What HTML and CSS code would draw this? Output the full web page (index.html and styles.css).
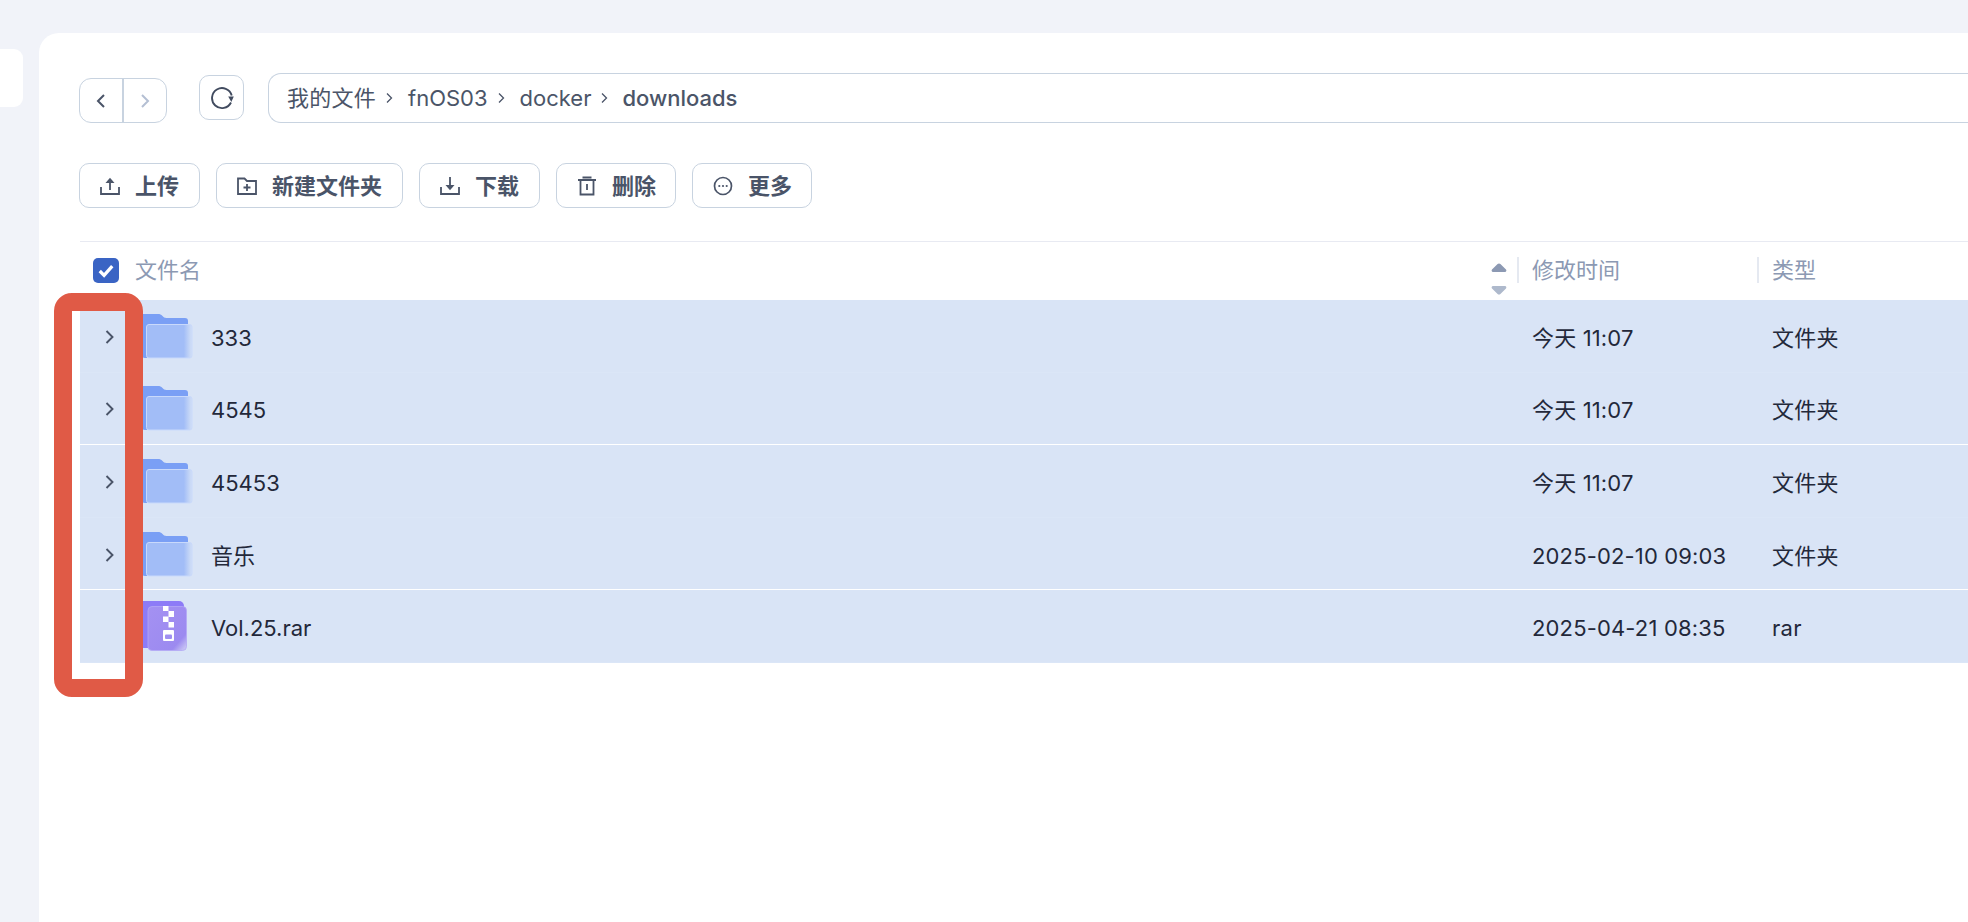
FILE: index.html
```html
<!DOCTYPE html>
<html lang="zh-CN">
<head>
<meta charset="utf-8">
<title>downloads</title>
<link rel="stylesheet" href="styles.css">
</head>
<body>
<svg class="defs" width="0" height="0" aria-hidden="true">
  <defs>
    <linearGradient id="fade" x1="0" x2="1" y1="0" y2="0">
      <stop offset="0" stop-color="#a2bdf7"/>
      <stop offset=".82" stop-color="#a2bdf7"/>
      <stop offset="1" stop-color="#d3e0f6"/>
    </linearGradient>
    <linearGradient id="fadeRar" x1="0" x2="1" y1="0" y2="1">
      <stop offset="0" stop-color="#a491f2"/>
      <stop offset=".8" stop-color="#9c8af0"/>
      <stop offset="1" stop-color="#d3d2f5"/>
    </linearGradient>
    <symbol id="folder" viewBox="0 0 52 46">
      <path d="M0 1h17c2 0 3 .5 4.500 2 1 1 2 2 4 2H44c2 0 3 1 3 3v6H8v31H4c-2 0-4-2-4-4z" fill="#7a9ff5"/>
      <rect x="5.500" y="11.500" width="45.500" height="33.500" rx="2.500" fill="url(#fade)" stroke="#c9d9fb"/>
    </symbol>
    <symbol id="rar" viewBox="0 0 46 50">
      <rect x="-6" y="0" width="49" height="47" rx="5" fill="#8d7bf7"/>
      <rect x="7" y="5.500" width="38.500" height="44" rx="4" fill="url(#fadeRar)" stroke="#b4a8f5" stroke-width=".8"/>
      <g fill="#fff">
        <rect x="22" y="5" width="5.500" height="5"/>
        <rect x="27.500" y="10" width="5.500" height="6"/>
        <rect x="22" y="15.500" width="5.500" height="5.500"/>
        <rect x="27.500" y="21" width="5.500" height="5.500"/>
      </g>
      <rect x="22" y="29" width="11" height="11" rx="1" fill="#fff"/>
      <rect x="24" y="33.500" width="7" height="4.500" rx="1" fill="#a08ff1"/>
    </symbol>
  </defs>
</svg>

<div class="page">
  <aside class="side-stub"></aside>
  <main class="panel">
    <div class="nav-bar">
      <div class="nav-group">
        <button class="nav-btn">
          <svg class="ic-nav" viewBox="0 0 12 16"><path d="M9 2 3 8l6 6" fill="none" stroke="#4a5468" stroke-width="2"/></svg>
        </button>
        <button class="nav-btn nav-next">
          <svg class="ic-nav" viewBox="0 0 12 16"><path d="M3 2l6 6-6 6" fill="none" stroke="#b4bfd3" stroke-width="2"/></svg>
        </button>
      </div>
      <button class="refresh">
        <svg class="ic-refresh" viewBox="0 0 24 24"><path d="M21 16.500A10 10 0 1 1 21.700 9.500" fill="none" stroke="#414b5f" stroke-width="1.900"/><path d="M18.200 10.500h5.600l-2.500 5.500z" fill="#414b5f"/></svg>
      </button>
      <div class="path-bar">
        <span class="crumb crumb-cjk">我的文件</span><svg class="ic-sep" viewBox="0 0 8 12"><path d="M2 1.500 6.500 6 2 10.500" fill="none" stroke="#4a5468" stroke-width="1.300"/></svg>
        <span class="crumb">fnOS03</span><svg class="ic-sep" viewBox="0 0 8 12"><path d="M2 1.500 6.500 6 2 10.500" fill="none" stroke="#4a5468" stroke-width="1.300"/></svg>
        <span class="crumb">docker</span><svg class="ic-sep" viewBox="0 0 8 12"><path d="M2 1.500 6.500 6 2 10.500" fill="none" stroke="#4a5468" stroke-width="1.300"/></svg>
        <span class="crumb crumb-current">downloads</span>
      </div>
    </div>

    <div class="toolbar">
      <button class="tool w-upload">
        <svg class="ic-tool" viewBox="0 0 20 20"><path d="M1 11v7h18v-7M10 14V3" fill="none" stroke="#4a5468" stroke-width="1.800"/><path d="M5.500 7 10 1.800 14.500 7z" fill="#4a5468"/></svg>
        <span>上传</span>
      </button>
      <button class="tool w-new">
        <svg class="ic-tool" viewBox="0 0 20 20"><path d="M1 18V2.500h6.500L10 5h9v13zM10 8v7M6.500 11.500h7" fill="none" stroke="#4a5468" stroke-width="1.800"/></svg>
        <span>新建文件夹</span>
      </button>
      <button class="tool w-down">
        <svg class="ic-tool" viewBox="0 0 20 20"><path d="M1 11v7h18v-7M10 1v9" fill="none" stroke="#4a5468" stroke-width="1.800"/><path d="M5.500 9 10 14.200 14.500 9z" fill="#4a5468"/></svg>
        <span>下载</span>
      </button>
      <button class="tool w-del">
        <svg class="ic-tool" viewBox="0 0 20 20"><path d="M1 4h18M5.500 1.500h9M3.500 4v14.500h13V4M10 8v6" fill="none" stroke="#4a5468" stroke-width="1.800"/></svg>
        <span>删除</span>
      </button>
      <button class="tool w-more">
        <svg class="ic-tool" viewBox="0 0 20 20"><circle cx="10" cy="10" r="8.500" fill="none" stroke="#4a5468" stroke-width="1.700"/><g fill="#4a5468"><circle cx="6.300" cy="10" r="1.100"/><circle cx="10" cy="10" r="1.100"/><circle cx="13.700" cy="10" r="1.100"/></g></svg>
        <span>更多</span>
      </button>
    </div>

    <div class="table">
      <div class="thead">
        <div class="th th-name">
          <span class="check"><svg viewBox="0 0 26 26"><path d="M6.500 13.500 11 18 19.500 8.500" fill="none" stroke="#fff" stroke-width="3.400"/></svg></span>
          <span class="th-label">文件名</span>
          <span class="sort">
            <svg viewBox="0 0 16 10" class="sort-up"><path d="M8 .5c.6 0 1 .2 1.400.6L15 6.500c.8.800.3 2.500-1 2.500H2C.7 9 .2 7.300 1 6.500L6.600 1.100C7 .7 7.400.5 8 .5z"/></svg>
            <svg viewBox="0 0 16 10" class="sort-down"><path d="M8 9.500c.6 0 1-.2 1.400-.6L15 3.500c.8-.8.3-2.500-1-2.500H2C.7 1 .2 2.700 1 3.500l5.600 5.400c.4.400.8.600 1.400.600z"/></svg>
          </span>
        </div>
        <div class="th th-date"><span class="th-label">修改时间</span></div>
        <div class="th th-type"><span class="th-label">类型</span></div>
      </div>

      <div class="row">
        <div class="cell-name"><span class="expander"><svg viewBox="0 0 10 14"><path d="M1.500 1 7.500 7 1.500 13" fill="none" stroke="#4a5468" stroke-width="1.900"/></svg></span><svg class="ic-folder"><use href="#folder"/></svg><span class="fname">333</span></div>
        <div class="cell-date">今天 11:07</div>
        <div class="cell-type">文件夹</div>
      </div>
      <div class="row row-split">
        <div class="cell-name"><span class="expander"><svg viewBox="0 0 10 14"><path d="M1.500 1 7.500 7 1.500 13" fill="none" stroke="#4a5468" stroke-width="1.900"/></svg></span><svg class="ic-folder"><use href="#folder"/></svg><span class="fname">4545</span></div>
        <div class="cell-date">今天 11:07</div>
        <div class="cell-type">文件夹</div>
      </div>
      <div class="row">
        <div class="cell-name"><span class="expander"><svg viewBox="0 0 10 14"><path d="M1.500 1 7.500 7 1.500 13" fill="none" stroke="#4a5468" stroke-width="1.900"/></svg></span><svg class="ic-folder"><use href="#folder"/></svg><span class="fname">45453</span></div>
        <div class="cell-date">今天 11:07</div>
        <div class="cell-type">文件夹</div>
      </div>
      <div class="row row-split">
        <div class="cell-name"><span class="expander"><svg viewBox="0 0 10 14"><path d="M1.500 1 7.500 7 1.500 13" fill="none" stroke="#4a5468" stroke-width="1.900"/></svg></span><svg class="ic-folder"><use href="#folder"/></svg><span class="fname">音乐</span></div>
        <div class="cell-date">2025-02-10 09:03</div>
        <div class="cell-type">文件夹</div>
      </div>
      <div class="row">
        <div class="cell-name"><span class="expander"></span><svg class="ic-rar"><use href="#rar"/></svg><span class="fname">Vol.25.rar</span></div>
        <div class="cell-date">2025-04-21 08:35</div>
        <div class="cell-type">rar</div>
      </div>
    </div>
  </main>
</div>
<div class="annotation"></div>
</body>
</html>
```

FILE: styles.css
```css
* { box-sizing: border-box; }
html, body { margin: 0; height: 100%; }
body {
  background: #f1f3f9;
  font-family: Inter, "Noto Sans CJK SC", sans-serif;
  font-size: 22px;
  line-height: 30px;
  color: #23283a;
  overflow: hidden;
  position: relative;
}
button { font: inherit; color: inherit; background: none; padding: 0; margin: 0; cursor: pointer; }
.defs { position: absolute; }

.page { display: flex; height: 922px; }
.side-stub {
  width: 23px; height: 58px; margin-top: 49px; margin-right: 16px;
  background: #fff; border-radius: 0 9px 9px 0; flex: none;
}
.panel {
  flex: 1; min-width: 0; margin-top: 33px;
  background: #fff; border-radius: 20px 0 0 0;
  padding: 40px 0 0 40px;
}

.nav-bar { display: flex; align-items: flex-start; height: 49px; }
.nav-group {
  display: flex; width: 88px; height: 45px; margin-top: 5px;
  border: 1px solid #c8d3e0; border-radius: 12px; flex: none;
}
.nav-btn { flex: 1; border: 0; display: flex; align-items: center; justify-content: center; }
.nav-next { border-left: 2px solid #c8d3e0; }
.ic-nav { width: 12px; height: 16px; }
.refresh {
  width: 45px; height: 45px; margin: 2px 0 0 32px;
  border: 1px solid #c8d3e0; border-radius: 10px; flex: none;
  display: flex; align-items: center; justify-content: center;
}
.ic-refresh { width: 24px; height: 24px; }
.path-bar {
  flex: 1; height: 50px; margin-left: 24px; padding-left: 18px;
  border: 1px solid #c8d3e0; border-right: 0; border-radius: 13px 0 0 13px;
  display: flex; align-items: center; color: #4b5568;
}
.crumb { white-space: nowrap; }
.crumb-cjk { letter-spacing: .25px; }
.crumb-current { font-weight: 500; margin-left: -1px; }
.ic-sep { width: 8px; height: 12px; margin: 0 15px 0 9px; flex: none; }

.toolbar { display: flex; gap: 16px; margin-top: 41px; }
.tool {
  height: 45px; border: 1px solid #c8d3e0; border-radius: 10px; background: #fff;
  display: flex; align-items: center; padding-left: 20px;
  font-weight: 600; color: #4a5468; flex: none;
}
.w-upload { width: 121px; }
.w-new { width: 187px; }
.w-down { width: 121px; }
.w-del { width: 120px; }
.w-more { width: 120px; }
.ic-tool { width: 20px; height: 20px; margin-right: 15px; flex: none; }

.table { margin: 33px 0 0 1px; }
.thead {
  display: flex; height: 59px; padding-bottom: 2px; border-top: 1px solid #e8eaf2;
  color: #8c99b3; align-items: center;
}
.th { display: flex; align-items: center; height: 26px; }
.th-name { width: 1437px; position: relative; }
.check {
  width: 26px; height: 25px; margin-left: 13px; margin-right: 16px;
  background: #3a64c4; border-radius: 5px; display: block;
}
.check svg { display: block; width: 26px; height: 25px; }
.sort {
  position: absolute; left: 1411px; top: 6px; width: 16px;
  display: flex; flex-direction: column; gap: 12px;
}
.sort svg { display: block; width: 16px; height: 10px; }
.sort-up { fill: #8c99b3; }
.sort-down { fill: #aeb9cc; }
.th-date { width: 240px; padding-left: 13px; border-left: 2px solid #e5e9f1; }
.th-type { padding-left: 13px; border-left: 2px solid #e5e9f1; }

.row {
  display: flex; align-items: center; height: 72.6px;
  background: #d9e4f6; border-bottom: 1px solid #dbe6f7;
}
.row-split { border-bottom: 1px solid #fff; }
.cell-name { width: 1438px; display: flex; align-items: center; }
.expander { width: 61px; display: flex; justify-content: flex-end; padding: 2px 26px 0 0; flex: none; }
.expander svg { width: 10px; height: 14px; display: block; }
.ic-folder { width: 52px; height: 46px; flex: none; margin-right: 18px; }
.ic-rar { width: 46px; height: 50px; flex: none; margin-right: 24px; overflow: hidden; }
.fname { white-space: nowrap; padding-top: 4px; }
.cell-date { width: 241px; padding: 4px 0 0 14px; white-space: nowrap; letter-spacing: .15px; }
.cell-type { padding: 4px 0 0 13px; white-space: nowrap; letter-spacing: .25px; }

.annotation {
  position: absolute; left: 54px; top: 293px; width: 89px; height: 404px;
  border: 18px solid #e05a46; border-radius: 18px;
}
```
